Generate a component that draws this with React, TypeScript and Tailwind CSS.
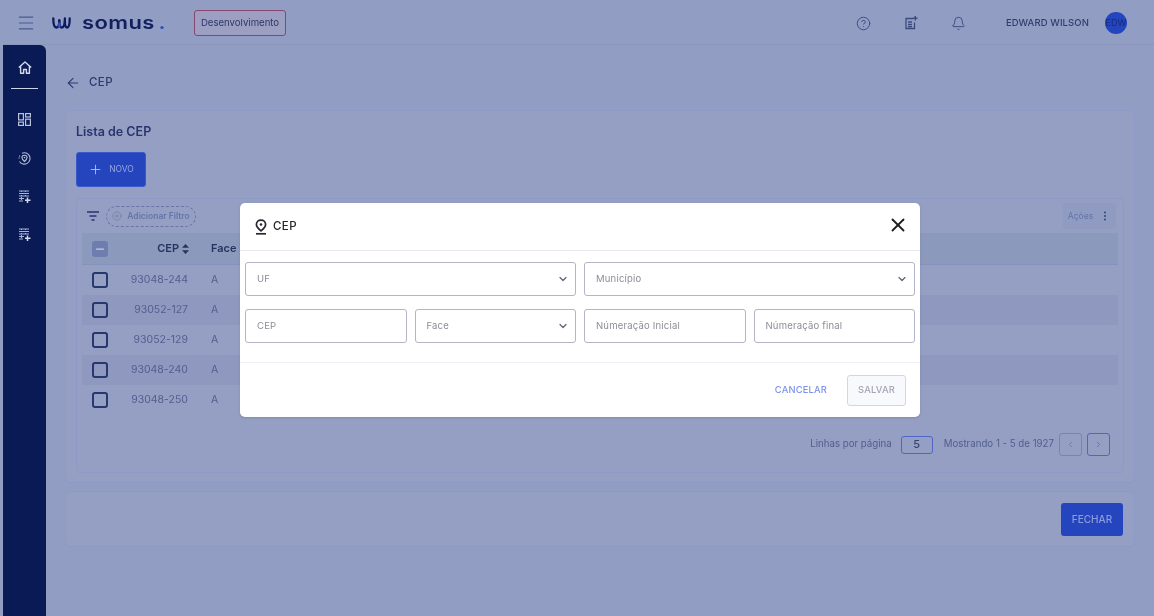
import { ArrowLeft, Bell, ChevronDown, ChevronLeft, ChevronRight, CircleHelp, CirclePlus, Menu, Minus, MoreVertical, Plus, X } from "lucide-react";

const font = { fontFamily: "Inter, 'Liberation Sans', sans-serif" };

function TableAdd() {
  return (
    <svg width="13" height="13" viewBox="0 0 13 13" fill="none" stroke="#aab3d0" strokeWidth="1.1">
      <path d="M1 1h10M1 3.500h10M1 6h10M1 8.500h5M1 11h4" />
      <path d="M3.500 1v10M7.500 1v5" strokeDasharray="1 1" />
      <path d="M9.500 7.500v5.500M7 10.200h5.500" strokeWidth="1.500" stroke="#d3d8ea" />
    </svg>
  );
}

function LocationRing() {
  return (
    <svg width="13" height="13" viewBox="0 0 13 13" fill="none" stroke="#b5bdd7" strokeWidth="1.100">
      <path d="M4 1.200A5.700 5.700 0 1 1 1.500 9.500" />
      <path d="M1 6.500a5.500 5.500 0 0 1 1-3" strokeDasharray="1 1" />
      <path d="M6.500 3.200c1.500 0 2.600 1 2.600 2.400 0 1.600-2.600 3.900-2.600 3.900S3.900 7.200 3.900 5.600c0-1.400 1.100-2.400 2.600-2.400z" />
      <circle cx="6.500" cy="5.600" r=".8" fill="#b5bdd7" stroke="none" />
    </svg>
  );
}

function DashIcon() {
  return (
    <svg width="13" height="13" viewBox="0 0 13 13" fill="none" stroke="#b9c1d9" strokeWidth="1.200">
      <rect x=".6" y=".6" width="4.800" height="6.300" />
      <rect x="7.600" y=".6" width="4.800" height="3.400" />
      <rect x=".6" y="9.100" width="4.800" height="3.300" />
      <rect x="7.600" y="6.200" width="4.800" height="6.200" />
    </svg>
  );
}

function HomeIcon() {
  return (
    <svg width="14" height="13" viewBox="0 0 14 13" fill="none" stroke="#d5daea" strokeWidth="1.400" strokeLinejoin="round">
      <path d="M.8 6.500 7 1l6.200 5.500M2.600 5.200v7h3V8.500h2.800v3.700h3v-7" />
    </svg>
  );
}

function PinDrop() {
  return (
    <svg width="14" height="16" viewBox="0 0 14 16" fill="none" stroke="#27272f" strokeWidth="1.700">
      <path d="M7 1.200c2.700 0 4.600 1.900 4.600 4.300 0 2.800-4.600 6.400-4.600 6.400S2.400 8.300 2.400 5.500C2.400 3.100 4.300 1.200 7 1.200z" />
      <circle cx="7" cy="5.500" r="1.300" fill="#27272f" stroke="none" />
      <path d="M2 14.800h10" />
    </svg>
  );
}

function SortCarets() {
  return (
    <svg width="7" height="10" viewBox="0 0 7 10" fill="#27335f">
      <path d="M3.500 0 7 3.800H0zM0 6.200h7L3.500 10z" />
    </svg>
  );
}

function Logo() {
  return (
    <div className="flex items-center">
      <svg width="19" height="12" viewBox="0 0 19 12" fill="none" strokeWidth="2.300" strokeLinecap="round">
        <path d="M1.300 1.500c0 5 1 9 3 9 2.200 0 3-3.500 3-7" stroke="#0d1c5c" />
        <path d="M7.300 3.500c0 4 .8 7 2.600 7 2.300 0 3-4 3-9" stroke="#0d1c5c" />
        <path d="M12.900 4.500c0 3.500.6 6 2.300 6 1.900 0 2.500-4 2.500-9" stroke="#0d1c5c" />
        <path d="M7.300 9.800V6.500" stroke="#3354c8" />
      </svg>
      <span className="ml-[11px] origin-left scale-x-[1.22] text-[18px] font-semibold leading-none tracking-[0.35px] text-[#12205e]">
        somus<span className="ml-[3px] text-[#2a48bd]">.</span>
      </span>
    </div>
  );
}

function Header() {
  return (
    <header className="flex h-[43px] shrink-0 items-center border-b border-[#8995bb] pl-[13px] pr-[27px]">
      <Menu size={20} strokeWidth={1.4} className="text-[#4a5890]" />
      <div className="ml-[16px] w-[142px]">
        <Logo />
      </div>
      <div className="flex h-[26px] w-[92px] items-center justify-center rounded-[3px] border border-[#8a4670] bg-[#9c9fc2] text-[9.600px] text-[#2d3767]">
        Desenvolvimento
      </div>
      <div className="ml-auto flex items-center">
        <CircleHelp size={15} strokeWidth={1.5} className="text-[#3d4a7e]" />
        <svg width="14" height="14" viewBox="0 0 14 14" fill="none" stroke="#3d4a7e" strokeWidth="1.300" className="ml-[33px]">
          <path d="M9 2.500H2v10h8.500V6.500M4 6h4M4 8.300h4M4 10.500h4" />
          <path d="M11.300 0v4.500M9 2.300h4.500" strokeWidth="1.400" />
        </svg>
        <Bell size={15} strokeWidth={1.5} className="ml-[33px] text-[#3d4a7e]" />
        <span className="ml-[40px] text-[9.500px] font-medium tracking-[0.1px] text-[#303c70]">EDWARD WILSON</span>
        <div className="ml-[16px] flex h-[22px] w-[22px] items-center justify-center overflow-hidden rounded-full bg-[#2345bd] text-[9px] text-[#1a2c7c]">
          EDW
        </div>
      </div>
    </header>
  );
}

function Sidebar() {
  return (
    <aside className="flex w-[43px] shrink-0 flex-col items-center rounded-tr-[6px] bg-[#091a55] pt-[16px]">
      <HomeIcon />
      <div className="mt-[14px] h-px w-[27px] bg-[#cdd3e6]" />
      <div className="mt-[24px]"><DashIcon /></div>
      <div className="mt-[26px]"><LocationRing /></div>
      <div className="mt-[25px]"><TableAdd /></div>
      <div className="mt-[25px]"><TableAdd /></div>
    </aside>
  );
}

const rows = ["93048-244", "93052-127", "93052-129", "93048-240", "93048-250"];

function Check() {
  return <div className="h-[16px] w-[16px] rounded-[3px] border-2 border-[#27386f]" />;
}

function Table() {
  return (
    <div className="mt-[11px] flex h-[275px] flex-col rounded-[4px] border border-[#8d9ac6] px-[5px]">
      <div className="flex h-[34px] items-center pl-[4px] pr-[2px]">
        <svg width="14" height="10" viewBox="0 0 14 10" fill="none" stroke="#27356f" strokeWidth="1.400">
          <path d="M1 1h12M3.500 5h7M5.500 9h3" />
        </svg>
        <div className="ml-[6px] flex h-[21px] w-[90px] items-center justify-center gap-[5px] rounded-full border border-dashed border-[#6875a7] text-[8.500px] font-semibold text-[#6674a8]">
          <CirclePlus size={10} strokeWidth={1.300} />
          Adicionar Filtro
        </div>
        <div className="ml-auto flex h-[26px] w-[53px] items-center justify-center gap-[6px] rounded-[3px] bg-[#8f9bc0] text-[8.500px] text-[#6674a8]">
          Ações
          <MoreVertical size={12} strokeWidth={2.200} className="text-[#3a4880]" />
        </div>
      </div>
      <div className="flex h-[32px] items-center border-b border-[#8592bd] bg-[#8b99bc] text-[11px] font-semibold text-[#27335f]">
        <div className="ml-[10px] flex h-[16px] w-[16px] items-center justify-center rounded-[3px] bg-[#6e7db0]">
          <Minus size={12} strokeWidth={2.500} className="text-[#c6cde2]" />
        </div>
        <div className="flex w-[81px] items-center justify-end gap-[3px]">
          CEP
          <SortCarets />
        </div>
        <div className="ml-[22px]">Face</div>
      </div>
      {rows.map((cep, i) => (
        <div key={cep} className={`flex h-[30px] items-center text-[10.500px] text-[#525e8e] ${i % 2 === 1 ? "bg-[#8f99bf]" : ""}`}>
          <div className="ml-[10px]"><Check /></div>
          <div className="w-[80px] text-right">{cep}</div>
          <div className="ml-[23px]">A</div>
        </div>
      ))}
      <div className="mt-[18px] flex items-center justify-end pr-[8px] text-[9.700px] text-[#515d8d]">
        <span>Linhas por página</span>
        <div className="ml-[9px] flex h-[18px] w-[32px] items-center justify-center rounded-[3px] border-[1.5px] border-[#4f66c8] text-[11px] font-medium text-[#36426f]">5</div>
        <span className="ml-[11px]">Mostrando 1 - 5 de 1927</span>
        <div className="ml-[5px] flex h-[23px] w-[23px] items-center justify-center rounded-[3px] border-[1.5px] border-[#7785b2] text-[#6674a8]">
          <ChevronLeft size={9} strokeWidth={2} />
        </div>
        <div className="ml-[5px] flex h-[23px] w-[23px] items-center justify-center rounded-[3px] border-[1.5px] border-[#4f66c8] text-[#4f66c8]">
          <ChevronRight size={9} strokeWidth={2} />
        </div>
      </div>
    </div>
  );
}

function Field({ label, select, className }: { label: string; select?: boolean; className: string }) {
  return (
    <div className={`flex h-[34px] items-center justify-between rounded-[3px] border-[1.5px] border-[#b3b5c6] pl-[11px] pr-[6px] text-[9.500px] tracking-[0.2px] text-[#8c8d97] ${className}`}>
      <span>{label}</span>
      {select && <ChevronDown size={12} strokeWidth={2.400} className="text-[#5d6272]" />}
    </div>
  );
}

function Modal() {
  return (
    <div className="fixed inset-0 flex items-start justify-start pl-[240px] pt-[203px]">
      <div className="flex h-[214px] w-[680px] flex-col rounded-[5px] bg-white shadow-sm">
        <div className="flex h-[48px] items-center border-b border-[#e8e9f2] pl-[14px] pr-[11px]">
          <PinDrop />
          <span className="ml-[5px] text-[11.500px] font-medium tracking-[0.4px] text-[#26262c]">CEP</span>
          <X size={22} strokeWidth={2} className="ml-auto -mt-[3px] text-[#1c1c22]" />
        </div>
        <div className="flex h-[112px] flex-col gap-[13px] border-b border-[#eff0f5] px-[5px] pt-[11px]">
          <div className="flex gap-[8px]">
            <Field label="UF" select className="flex-1" />
            <Field label="Município" select className="flex-1" />
          </div>
          <div className="flex gap-[8px]">
            <Field label="CEP" className="flex-1" />
            <Field label="Face" select className="flex-1" />
            <Field label="Númeração Inicial" className="flex-1" />
            <Field label="Númeração final" className="flex-1" />
          </div>
        </div>
        <div className="flex flex-1 items-center justify-end pr-[14px]">
          <span className="text-[9.300px] font-medium tracking-[0.2px] text-[#7e92ea]">CANCELAR</span>
          <div className="ml-[20px] flex h-[31px] w-[59px] items-center justify-center rounded-[3px] border-[1.5px] border-[#d2d6e2] bg-[#f8f9fc] text-[9.300px] font-medium tracking-[0.2px] text-[#a3a5b5]">
            SALVAR
          </div>
        </div>
      </div>
    </div>
  );
}

export default function App() {
  return (
    <div style={font} className="flex h-[616px] w-[1154px] flex-col overflow-hidden bg-[#929dc3] pl-[3px] pt-[2px] blur-[0.5px]">
      <Header />
      <div className="flex min-h-0 flex-1">
        <Sidebar />
        <main className="flex-1 pl-[19px] pr-[19px]">
          <div className="flex h-[65px] items-center pl-0 pt-[10px] text-[#2d3a6e]">
            <ArrowLeft size={16} strokeWidth={1.600} />
            <span className="ml-[8px] text-[11.500px] font-medium tracking-[0.4px]">CEP</span>
          </div>
          <section className="h-[373px] rounded-[5px] border border-[#8d9ac6] bg-[#959fc4] px-[10px] pt-[13px]">
            <h1 className="text-[12.500px] font-semibold leading-[16px] text-[#27356b]">Lista de CEP</h1>
            <button className="mt-[12px] flex h-[35px] w-[70px] items-center justify-center gap-[6px] rounded-[3px] border border-[#3a58c8] bg-[#2445bd] text-[8.500px] text-[#96a6e0]">
              <Plus size={15} strokeWidth={1.300} className="text-[#c4cdee]" />
              NOVO
            </button>
            <Table />
          </section>
          <section className="mt-[8px] flex h-[56px] items-center justify-end rounded-[5px] border border-[#8d9ac6] bg-[#959fc4] pr-[11px]">
            <button className="h-[33px] w-[62px] rounded-[3px] bg-[#2445bd] text-[10px] font-medium text-[#8c9ddd]">FECHAR</button>
          </section>
        </main>
      </div>
      <Modal />
    </div>
  );
}
